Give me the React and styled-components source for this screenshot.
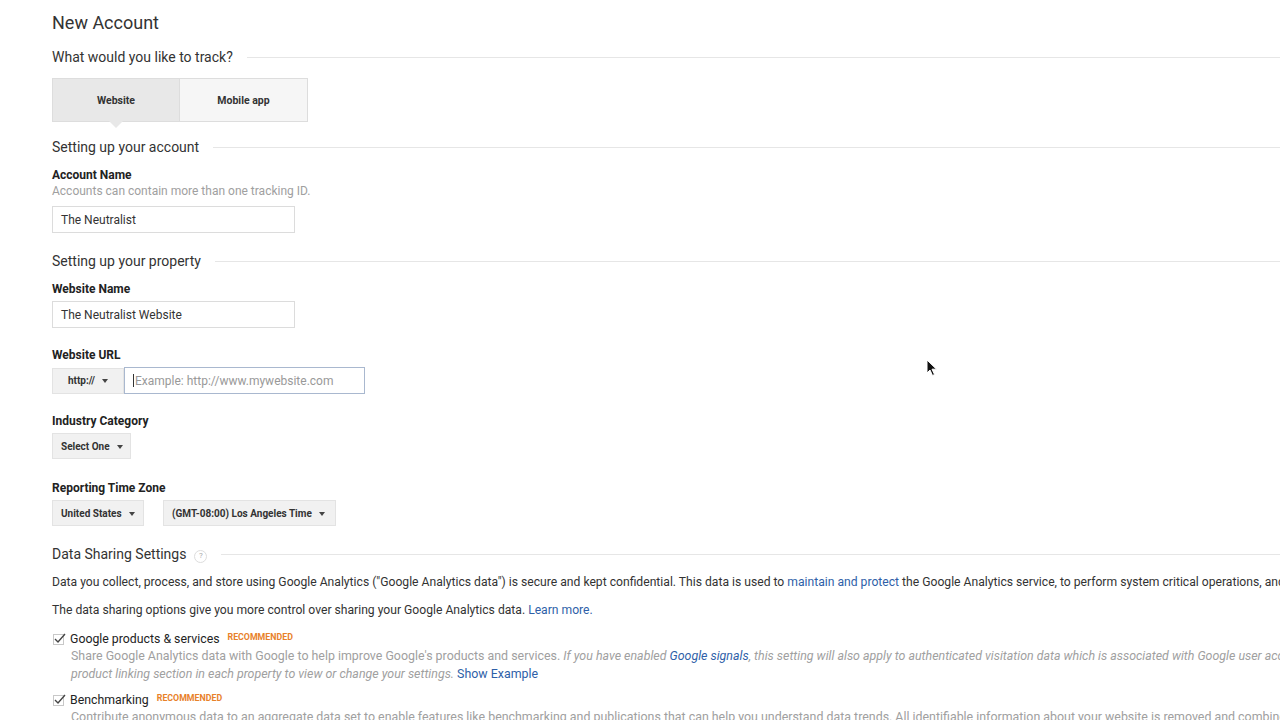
import React from 'react';
import styled, { createGlobalStyle } from 'styled-components';

const GlobalStyle = createGlobalStyle`
  html, body {
    margin: 0;
    padding: 0;
    background: #fff;
    overflow: hidden;
  }
  body {
    font-family: Roboto, "Liberation Sans", Arial, sans-serif;
    color: #222;
  }
`;

const Page = styled.div`
  position: relative;
  width: 1280px;
  height: 720px;
  overflow: hidden;
  padding: 13px 0 0 52px;
  box-sizing: border-box;
`;

const Title = styled.h1`
  margin: 0;
  font-size: 18px;
  font-weight: 400;
  color: #333;
  line-height: 20px;
`;

const SectionHead = styled.div`
  display: flex;
  align-items: center;
  gap: 14px;
  margin-top: ${(p) => p.$top || 0}px;
  font-size: 14px;
  color: #333;
  line-height: 18px;
  white-space: nowrap;

  &:after {
    content: '';
    flex: 1;
    height: 1px;
    background: #e6e6e6;
  }
`;

const HelpIcon = styled.span`
  display: inline-flex;
  align-items: center;
  justify-content: center;
  width: 11px;
  height: 11px;
  border: 1px solid #ddd;
  border-radius: 50%;
  font-size: 8px;
  color: #aaa;
  margin-left: -6px;
  margin-top: 4px;
`;

const Tabs = styled.div`
  display: flex;
  margin-top: 12px;
  width: 257px;
`;

const Tab = styled.div`
  position: relative;
  width: 128px;
  height: 44px;
  display: flex;
  align-items: center;
  justify-content: center;
  box-sizing: border-box;
  border: 1px solid #ddd;
  border-left-width: ${(p) => (p.$first ? 1 : 0)}px;
  background: ${(p) => (p.$active ? '#e8e8e8' : '#f6f6f6')};
  font-size: 10.5px;
  font-weight: 700;
  color: #333;

  ${(p) =>
    p.$active &&
    `
    &:after {
      content: '';
      position: absolute;
      left: 50%;
      bottom: -7px;
      margin-left: -7px;
      border-left: 7px solid transparent;
      border-right: 7px solid transparent;
      border-top: 7px solid #e8e8e8;
    }
  `}
`;

const Field = styled.div`
  margin-top: ${(p) => p.$top || 0}px;
`;

const Label = styled.div`
  font-size: 12px;
  font-weight: 700;
  color: #222;
  line-height: 16px;
`;

const Hint = styled.div`
  font-size: 12px;
  color: #a0a0a0;
  line-height: 16px;
`;

const TextInput = styled.div`
  box-sizing: border-box;
  width: ${(p) => p.$w || 243}px;
  height: 27px;
  margin-top: ${(p) => p.$top || 0}px;
  border: 1px solid ${(p) => (p.$focus ? '#a9b8cf' : '#dcdcdc')};
  padding: 0 8px;
  display: flex;
  align-items: center;
  font-size: 12px;
  color: ${(p) => (p.$placeholder ? '#999' : '#333')};
  background: #fff;
`;

const Caret = styled.span`
  width: 1px;
  height: 13px;
  background: #333;
  margin-right: 1px;
`;

const Row = styled.div`
  display: flex;
  align-items: center;
  gap: ${(p) => p.$gap || 0}px;
  margin-top: ${(p) => p.$top || 0}px;
`;

const Dropdown = styled.div`
  box-sizing: border-box;
  height: 26px;
  width: ${(p) => p.$w}px;
  padding: 0 8px;
  display: flex;
  align-items: center;
  justify-content: ${(p) => (p.$center ? 'center' : 'flex-start')};
  gap: 7px;
  background: #f1f1f1;
  border: 1px solid #e3e3e3;
  font-size: 10px;
  font-weight: 700;
  color: #333;
  white-space: nowrap;

  &:after {
    content: '';
    border-left: 3.5px solid transparent;
    border-right: 3.5px solid transparent;
    border-top: 4px solid #444;
    margin-top: 1px;
  }
`;

const Para = styled.p`
  margin: ${(p) => p.$top || 0}px 0 0;
  font-size: 12.15px;
  line-height: 18px;
  color: #333;
  white-space: nowrap;
`;

const Link = styled.a`
  color: #2f5fa8;
  text-decoration: none;
`;

const Check = styled.div`
  display: flex;
  align-items: center;
  margin-top: ${(p) => p.$top || 0}px;
  padding-left: 1px;
  white-space: nowrap;
`;

const Box = styled.span`
  width: 11px;
  height: 11px;
  border: 1px solid #c8c8c8;
  position: relative;
  margin-right: 6px;
  box-sizing: border-box;

  svg {
    position: absolute;
    left: -1px;
    top: -3px;
  }
`;

const CheckLabel = styled.span`
  font-size: 12.3px;
  color: #222;
`;

const Badge = styled.span`
  font-size: 8.8px;
  font-weight: 700;
  color: #e8812a;
  margin-left: 8px;
  margin-top: -4px;
`;

const Desc = styled.div`
  padding-left: 19px;
  margin-top: ${(p) => p.$top || 0}px;
  font-size: 12.4px;
  line-height: 18px;
  color: #a0a0a0;
  white-space: nowrap;
`;

const Cursor = styled.svg`
  position: absolute;
  left: 926px;
  top: 359px;
`;

const Tick = () => (
  <svg width="13" height="13" viewBox="0 0 13 13">
    <path d="M2 7 L5 10 L12 2" fill="none" stroke="#444" strokeWidth="1.4" />
  </svg>
);

const CheckItem = ({ top, children }) => (
  <Check $top={top}>
    <Box>
      <Tick />
    </Box>
    <CheckLabel>{children}</CheckLabel>
    <Badge>RECOMMENDED</Badge>
  </Check>
);

const App = () => {
  return (
    <>
      <GlobalStyle />
      <Page>
        <Title>New Account</Title>
        <SectionHead $top={15}>What would you like to track?</SectionHead>
        <Tabs>
          <Tab $active $first>Website</Tab>
          <Tab>Mobile app</Tab>
        </Tabs>

        <SectionHead $top={16}>Setting up your account</SectionHead>
        <Field $top={11}>
          <Label>Account Name</Label>
          <Hint>Accounts can contain more than one tracking ID.</Hint>
          <TextInput $top={7}>The Neutralist</TextInput>
        </Field>

        <SectionHead $top={19}>Setting up your property</SectionHead>
        <Field $top={11}>
          <Label>Website Name</Label>
          <TextInput $top={4}>The Neutralist Website</TextInput>
        </Field>

        <Field $top={19}>
          <Label>Website URL</Label>
          <Row $top={4}>
            <Dropdown $w={72} $center>http://</Dropdown>
            <TextInput $w={241} $focus $placeholder>
              <Caret />
              Example: http://www.mywebsite.com
            </TextInput>
          </Row>
        </Field>

        <Field $top={19}>
          <Label>Industry Category</Label>
          <Row $top={4}>
            <Dropdown $w={79}>Select One</Dropdown>
          </Row>
        </Field>

        <Field $top={21}>
          <Label>Reporting Time Zone</Label>
          <Row $top={4} $gap={19}>
            <Dropdown $w={92}>United States</Dropdown>
            <Dropdown $w={173}>(GMT-08:00) Los Angeles Time</Dropdown>
          </Row>
        </Field>

        <SectionHead $top={19}>
          Data Sharing Settings
          <HelpIcon>?</HelpIcon>
        </SectionHead>
        <Para $top={10}>
          Data you collect, process, and store using Google Analytics ("Google Analytics data") is secure and kept
          confidential. This data is used to <Link>maintain and protect</Link> the Google Analytics service, to perform
          system critical operations, and in rare exceptions for legal reasons as described in our privacy policy.
        </Para>
        <Para $top={10}>
          The data sharing options give you more control over sharing your Google Analytics data.{' '}
          <Link>Learn more.</Link>
        </Para>

        <CheckItem top={13}>Google products &amp; services</CheckItem>
        <Desc $top={1}>
          Share Google Analytics data with Google to help improve Google's products and services.{' '}
          <em>
            If you have enabled <Link>Google signals</Link>, this setting will also apply to authenticated visitation
            data which is associated with Google user accounts. This setting is required for Demographics and Interests
          </em>
        </Desc>
        <Desc>
          <em>product linking section in each property to view or change your settings.</em> <Link>Show Example</Link>
        </Desc>

        <CheckItem top={10}>Benchmarking</CheckItem>
        <Desc $top={1}>
          Contribute anonymous data to an aggregate data set to enable features like benchmarking and publications that
          can help you understand data trends. All identifiable information about your website is removed and combined
          with other anonymous data before it is shared with others.
        </Desc>

        <Cursor width="12" height="18" viewBox="0 0 12 18">
          <path d="M1 1 L1 14 L4 11 L6.5 16.5 L8.5 15.5 L6 10.2 L10.5 10.2 Z" fill="#111" stroke="#fff" strokeWidth="1" />
        </Cursor>
      </Page>
    </>
  );
};

export default App;
